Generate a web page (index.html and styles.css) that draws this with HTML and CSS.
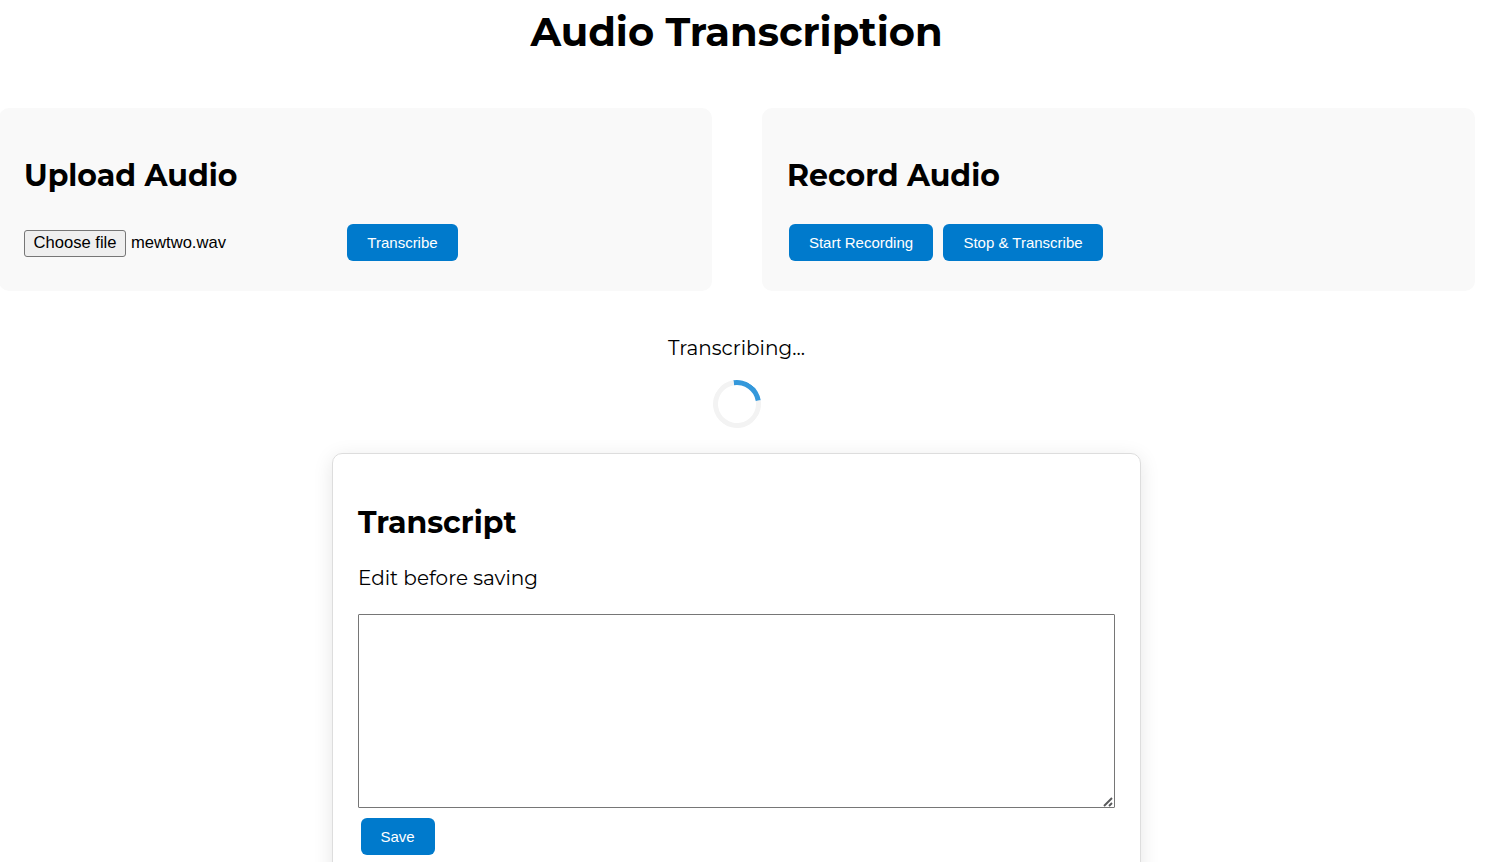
FILE: index.html
```html
<!DOCTYPE html>
<html lang="en">
<head>
<meta charset="utf-8">
<title>Audio Transcription</title>
<link rel="stylesheet" href="styles.css">
</head>
<body>
<main class="page">
  <h1 class="title">Audio Transcription</h1>
  <div class="cards">
    <section class="card">
      <h2 class="heading">Upload Audio</h2>
      <div class="controls">
        <div class="file"><button class="choose">Choose file</button><span>mewtwo.wav</span></div>
        <button class="btn">Transcribe</button>
      </div>
    </section>
    <section class="card">
      <h2 class="heading">Record Audio</h2>
      <div class="controls">
        <button class="btn start">Start Recording</button>
        <button class="btn stop">Stop &amp; Transcribe</button>
      </div>
    </section>
  </div>
  <div class="status">
    <p class="status-text">Transcribing...</p>
    <div class="spinner"></div>
  </div>
  <section class="transcript">
    <h2 class="heading">Transcript</h2>
    <p class="hint">Edit before saving</p>
    <div class="editor-wrap">
      <textarea class="editor"></textarea>
      <svg class="grip" width="10" height="10" viewBox="0 0 10 10"><path d="M1 9L9 1M6 9L9 6" fill="none" stroke="#58595b" stroke-width="1.9"/></svg>
    </div>
    <button class="btn save">Save</button>
  </section>
</main>
</body>
</html>
```

FILE: styles.css
```css
html, body { height: 100%; overflow: hidden; }
body { margin: 0; background: #fff; color: #000; font-family: Montserrat, Inter, sans-serif; }
* { box-sizing: border-box; }
.page { width: 1476px; margin-left: -1px; }
.title { margin: 0; height: 108px; padding: 7px 1px 0 0; font-size: 40px; line-height: 49px; font-weight: 700; text-align: center; white-space: nowrap; }
.cards { display: grid; grid-template-columns: 1fr 1fr; gap: 50px; }
.card { height: 183px; padding: 49px 25px 0; background: #f9f9f9; border-radius: 10px; }
.heading { margin: 0; height: 37px; font-size: 30px; line-height: 37px; font-weight: 700; white-space: nowrap; }
.controls { display: flex; align-items: center; margin-top: 30px; }
.file { display: flex; align-items: center; gap: 5px; width: 321px; margin-right: 2px; font: 16.6px "Liberation Sans", sans-serif; }
.choose { width: 102px; height: 27px; margin-top: 2px; padding: 0 0 2px; font: inherit; color: #000; background: #efefef; border: 1px solid #767676; border-radius: 3px; }
.btn { height: 37px; width: 111px; padding: 0; border: 0; border-radius: 6px; background: #007acc; color: #fff; font: 15px "Liberation Sans", sans-serif; white-space: nowrap; }
.start { width: 144px; margin-left: 2px; }
.stop { width: 160px; margin-left: 10px; }
.status { display: flex; flex-direction: column; align-items: center; height: 162px; padding-top: 45px; }
.status-text { margin: 0; padding-right: 1px; font-size: 20px; line-height: 24px; }
.spinner { width: 48px; height: 48px; margin-top: 20px; border: 5px solid #f3f3f3; border-top-color: #3498db; border-radius: 50%; transform: rotate(36deg); }
.transcript { width: 809px; height: 440px; margin: 0 0 0 333px; padding: 50px 25px 0; border: 1px solid #ddd; border-radius: 10px; box-shadow: 0 4px 20px rgba(0, 0, 0, .1); }
.hint { margin: 25px 0 0; font-size: 20px; line-height: 24px; }
.editor-wrap { position: relative; width: 757px; margin: 24px 0 10px; }
.editor { display: block; width: 100%; height: 194px; border: 1px solid #767676; border-radius: 1px; background: #fff; resize: none; }
.grip { position: absolute; right: 2px; bottom: 1px; }
.save { width: 74px; margin-left: 3px; padding-right: 1px; }
```
